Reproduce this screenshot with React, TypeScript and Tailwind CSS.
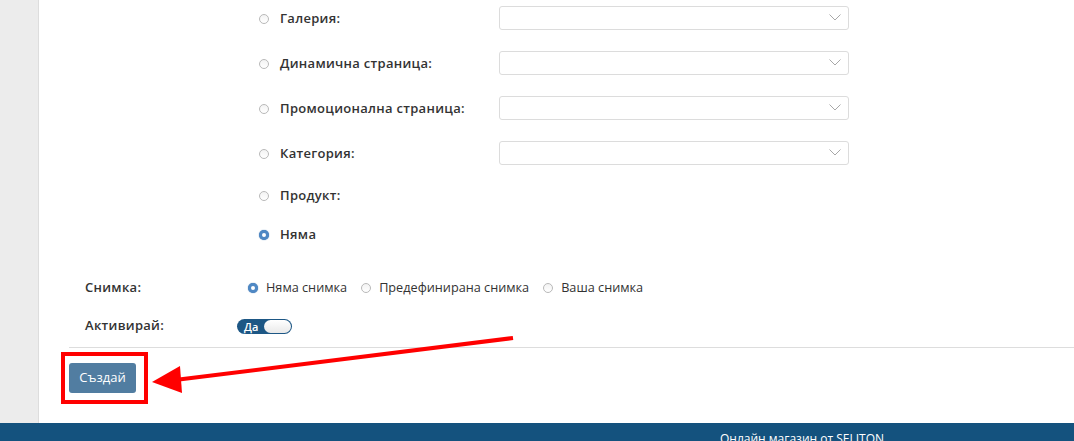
import { useState } from "react";

const linkRows = [
  { label: "Галерия:", select: true, h: "h-[45px]" },
  { label: "Динамична страница:", select: true, h: "h-[45px]" },
  { label: "Промоционална страница:", select: true, h: "h-[45px]" },
  { label: "Категория:", select: true, h: "h-[45px]" },
  { label: "Продукт:", select: false, h: "h-[39px]" },
  { label: "Няма", select: false, h: "h-[40px]" },
];

function Radio({ checked }: { checked: boolean }) {
  return checked ? (
    <span className="w-[10px] h-[10px] rounded-full border-[3px] border-[#4f88c4] bg-white shrink-0 shadow-[0_0_1px_#2d6aa8]"></span>
  ) : (
    <span className="w-[10px] h-[10px] rounded-full border border-[#b9b9b9] bg-gradient-to-b from-[#f3f3f3] to-white shrink-0"></span>
  );
}

function Chevron() {
  return (
    <svg width="12" height="7" viewBox="0 0 12 7" className="mr-[7px]">
      <polyline points="0.5,0.5 6,6 11.5,0.5" fill="none" stroke="#a8a8a8" strokeWidth="1" />
    </svg>
  );
}

export default function App() {
  const [linkType, setLinkType] = useState(5);
  const [image, setImage] = useState(0);
  const [active, setActive] = useState(true);

  const images = ["Няма снимка", "Предефинирана снимка", "Ваша снимка"];

  return (
    <div className="relative h-[441px] flex flex-col overflow-hidden bg-white font-['Open_Sans',sans-serif] text-[13px] text-[#333]">
      <div className="flex flex-1 min-h-0">
        <div className="w-[39px] shrink-0 bg-[#ececec] border-r border-[#dddddd]"></div>

        <div className="flex-1 flex flex-col">
          <div className="-mt-[5px] pl-[220px]">
            {linkRows.map((row, i) => (
              <div key={row.label} className={`flex items-center ${row.h}`}>
                <button className="flex items-center pt-[2px]" onClick={() => setLinkType(i)}>
                  <Radio checked={linkType === i} />
                  <span className="ml-[11px] w-[219px] text-left font-semibold tracking-[0.3px]">
                    {row.label}
                  </span>
                </button>
                {row.select ? (
                  <div className="w-[350px] h-[24px] border border-[#dcdcdc] rounded-[3px] flex items-center justify-end">
                    <Chevron />
                  </div>
                ) : null}
              </div>
            ))}
          </div>

          <div className="mt-[22px] h-[24px] pl-[46px] flex items-center">
            <span className="w-[163px] font-semibold tracking-[0.3px]">Снимка:</span>
            {images.map((name, i) => (
              <button
                key={name}
                onClick={() => setImage(i)}
                className="flex items-center mr-[14px]"
              >
                <Radio checked={image === i} />
                <span className="ml-[8px] text-[12.7px]">{name}</span>
              </button>
            ))}
          </div>

          <div className="mt-[14px] h-[24px] pl-[46px] flex items-center">
            <span className="w-[152px] font-semibold tracking-[0.3px]">Активирай:</span>
            <button
              onClick={() => setActive((v) => !v)}
              className="w-[55px] h-[15px] rounded-full bg-[#1d5785] flex items-center justify-between p-[1px]"
            >
              <span className="pl-[6px] text-[11px] leading-none font-semibold text-white">
                {active ? "Да" : "Не"}
              </span>
              <span className="w-[27px] h-[13px] rounded-full bg-gradient-to-b from-white to-[#e9e9e9]"></span>
            </button>
          </div>

          <div className="mt-[9px] ml-[30px] border-t border-[#dddddd]"></div>

          <div className="mt-[15px] ml-[30px]">
            <button className="w-[67px] h-[30px] rounded-[3px] bg-[#517da1] text-white text-[13px]">
              Създай
            </button>
          </div>
        </div>
      </div>

      <footer className="h-[18px] shrink-0 bg-[#14527e] pl-[720px] pt-[6px]">
        <span className="text-white text-[12px] leading-none whitespace-nowrap">Онлайн магазин от SELITON</span>
      </footer>

      <div className="absolute left-[61px] top-[352px] w-[87px] h-[52px] border-[4px] border-[#ff0000] pointer-events-none"></div>
      <svg
        className="absolute inset-0 w-full h-full pointer-events-none"
        viewBox="0 0 1074 441"
      >
        <line x1="513" y1="338" x2="175" y2="380" stroke="#ff0000" strokeWidth="4" />
        <polygon points="152,382 180,366 182,393" fill="#ff0000" />
      </svg>
    </div>
  );
}
